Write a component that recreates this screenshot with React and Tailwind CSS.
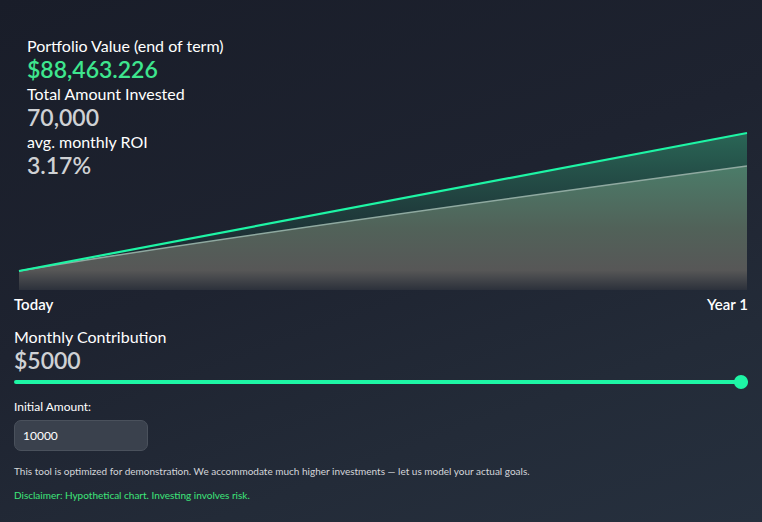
import React from "react";

function Chart() {
  // svg coords: page x - 14, page y - 20
  const green = "M5 251 L 733 113";
  const gray = "M5 251 Q 180 221 733 146";
  return (
    <svg width="734" height="270" viewBox="0 0 734 270" className="block">
      <defs>
        <linearGradient id="gFill" x1="0" y1="0" x2="0" y2="1">
          <stop offset="0%" stopColor="#2a6656" stopOpacity="1" />
          <stop offset="60%" stopColor="#1e3a3a" stopOpacity="0.8" />
          <stop offset="100%" stopColor="#1e2530" stopOpacity="0" />
        </linearGradient>
        <linearGradient id="grayFill" x1="0" y1="0" x2="0" y2="1">
          <stop offset="0" stopColor="#4b7c69" />
          <stop offset="0.5" stopColor="#516259" />
          <stop offset="0.84" stopColor="#575757" />
          <stop offset="1" stopColor="#2c313b" />
        </linearGradient>
      </defs>
      <path d={`${green} L733 270 L5 270 Z`} fill="url(#gFill)" />
      <path d={`${gray} L733 270 L5 270 Z`} fill="url(#grayFill)" />
      <path d={gray} fill="none" stroke="#8fa9a0" strokeWidth="1.6" />
      <path d={green} fill="none" stroke="#1ef5a5" strokeWidth="2.2" />
    </svg>
  );
}

export default function App() {
  return (
    <div
      className="w-[762px] h-[522px] overflow-hidden bg-[linear-gradient(160deg,#191d29_0%,#1e2330_45%,#232b38_75%,#26303e_100%)] text-white px-[14px] pt-[20px]"
      style={{ fontFamily: "Lato, 'Noto Sans', sans-serif" }}
    >
      <div className="relative w-[734px] h-[270px]">
        <Chart />
        <div className="absolute left-[13px] top-[16px] flex flex-col">
          <div className="text-[16px] leading-[20px] text-white">Portfolio Value (end of term)</div>
          <div className="text-[23px] leading-[26px] font-semibold text-[#3ee68e]">$88,463.226</div>
          <div className="text-[16px] leading-[20px] text-white mt-[2px]">Total Amount Invested</div>
          <div className="text-[23px] leading-[26px] font-semibold text-[#cfd1d4]">70,000</div>
          <div className="text-[16px] leading-[20px] text-white mt-[2px]">avg. monthly ROI</div>
          <div className="text-[23px] leading-[26px] font-semibold text-[#cfd1d4]">3.17%</div>
        </div>
      </div>
      <div className="flex justify-between text-[15px] leading-[20px] font-semibold mt-[4px]">
        <span>Today</span>
        <span>Year 1</span>
      </div>
      <div className="mt-[13px] text-[16px] leading-[20px]">Monthly Contribution</div>
      <div className="text-[23px] leading-[26px] font-semibold text-[#cfd1d4]">$5000</div>
      <div className="relative mt-[2px] h-[14px] w-[734px] flex items-center">
        <div className="h-[4px] w-full rounded-full bg-[#1ef5a5]" />
        <div className="absolute right-0 top-0 w-[14px] h-[14px] rounded-full bg-[#1ef5a5]" />
      </div>
      <div className="mt-[10px] text-[12px] leading-[16px] text-white">Initial Amount:</div>
      <div className="mt-[5px] w-[134px] h-[31px] rounded-[7px] bg-[#3a414d] border border-[#4a515c] flex items-center px-[8px] text-[12px] text-white">
        10000
      </div>
      <div className="mt-[13px] text-[10px] leading-[14px] text-[#d4d6da]">
        This tool is optimized for demonstration. We accommodate much higher investments — let us model your actual goals.
      </div>
      <div className="mt-[10px] text-[10px] leading-[14px] text-[#3ee67a]">
        Disclaimer: Hypothetical chart. Investing involves risk.
      </div>
    </div>
  );
}
